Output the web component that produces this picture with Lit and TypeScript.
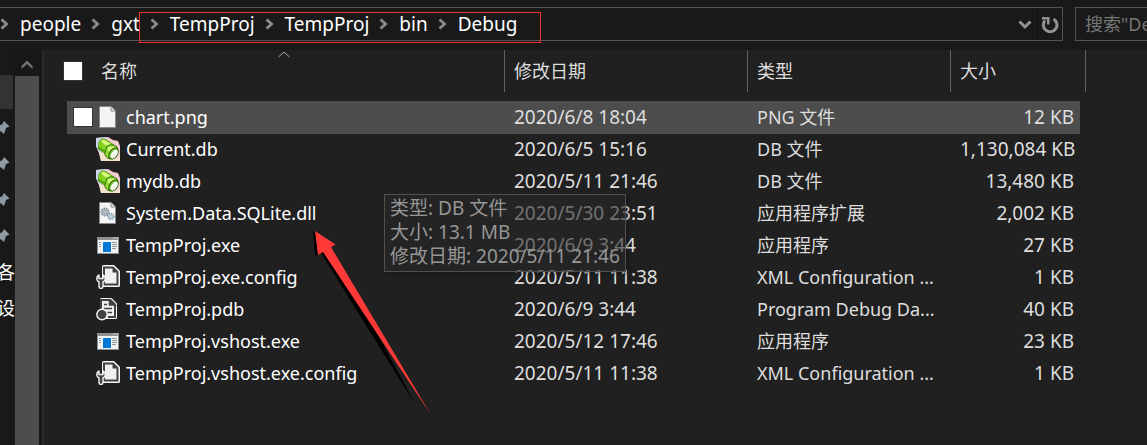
import { LitElement, html, css, svg } from "lit";
import { customElement } from "lit/decorators.js";

type Kind = "blank" | "db" | "dll" | "exe" | "config" | "pdb";
interface FileRow { name: string; date: string; type: string; size: string; kind: Kind; }

const FILES: FileRow[] = [
  { name: "chart.png", date: "2020/6/8 18:04", type: "PNG 文件", size: "12 KB", kind: "blank" },
  { name: "Current.db", date: "2020/6/5 15:16", type: "DB 文件", size: "1,130,084 KB", kind: "db" },
  { name: "mydb.db", date: "2020/5/11 21:46", type: "DB 文件", size: "13,480 KB", kind: "db" },
  { name: "System.Data.SQLite.dll", date: "2020/5/30 23:51", type: "应用程序扩展", size: "2,002 KB", kind: "dll" },
  { name: "TempProj.exe", date: "2020/6/9 3:44", type: "应用程序", size: "27 KB", kind: "exe" },
  { name: "TempProj.exe.config", date: "2020/5/11 11:38", type: "XML Configuration ...", size: "1 KB", kind: "config" },
  { name: "TempProj.pdb", date: "2020/6/9 3:44", type: "Program Debug Da...", size: "40 KB", kind: "pdb" },
  { name: "TempProj.vshost.exe", date: "2020/5/12 17:46", type: "应用程序", size: "23 KB", kind: "exe" },
  { name: "TempProj.vshost.exe.config", date: "2020/5/11 11:38", type: "XML Configuration ...", size: "1 KB", kind: "config" },
];

const page = svg`<path d="M3.5 1.5H15L19.5 6V22.5H3.5Z" fill="#f3f4f5" stroke="#898989"/>
  <path d="M15 1.5V6H19.5" fill="#dcdcdc" stroke="#898989"/>`;

const ICONS: Record<Kind, unknown> = {
  blank: page,
  db: svg`
    <path d="M0 1L12 0L17 3L22 4L24 9V24H5L3 16L0 9Z" fill="#f3cdd4"/>
    <path d="M0 1L10 0L12 12L6 18L3 16L0 9Z" fill="#cdd3ee"/>
    <path d="M3 15L12 17L20 22L24 20V24H5Z" fill="#f4e3cc"/>
    <path d="M3 5Q5 1 9 2L18 8L10 17L2 12Z" fill="#84d11e" stroke="#4f9a14" stroke-width=".8"/>
    <path d="M5 4.500Q7 2 9 3.300L16 8L13 11Z" fill="#d8fb7c"/>
    <path d="M2.500 10.500L10 15.500" stroke="#4a9610" stroke-width="1.500"/>
    <path d="M11 9Q16 6 21 10L22 13L14 22Q8 20 9 15Z" fill="#8fe02c" stroke="#35740f"/>
    <path d="M11.500 11.500Q15 8 19 10.500L13 15Z" fill="#dcff8c"/>
    <ellipse cx="17.500" cy="16.500" rx="4" ry="6.200" transform="rotate(35 17.500 16.500)" fill="#6bbd21" stroke="#2c650d"/>
    <ellipse cx="18.200" cy="17" rx="2.800" ry="4.800" transform="rotate(35 18.200 17)" fill="#f2f8f2"/>`,
  dll: svg`${page}
    <circle cx="9" cy="11" r="3.5" fill="#d3dade" stroke="#7c8b95" stroke-width="2" stroke-dasharray="1.6 .8"/>
    <circle cx="9" cy="11" r="1.4" fill="#fff" stroke="#7c8b95"/>
    <circle cx="15" cy="15.5" r="2.8" fill="#dfeaf1" stroke="#7c96a6" stroke-width="1.6" stroke-dasharray="1.4 .7"/>
    <circle cx="15" cy="15.5" r="1" fill="#fff" stroke="#7c96a6" stroke-width=".7"/>`,
  exe: svg`
    <path d="M1.5 4.5H22.5V20.5H1.5Z" fill="#f3f3f3" stroke="#8b9092"/>
    <path d="M1 4H23V7H1Z" fill="#8b9092"/>
    <path d="M17 5h1M19 5h1M21 5h1" stroke="#e8e8e8"/>
    <path d="M7 9H15V19H7Z" fill="#0078d7"/>
    <path d="M3 9.5h2M3 11.5h2M3 13.5h2M16 9.5h5M16 11.5h5M16 13.5h5M16 15.5h4" stroke="#8f9799"/>`,
  config: svg`
    <path d="M7.5 1.5H17.5L22.5 6.5V20.5H7.5Z" fill="#f0eff1" stroke="#f6f6f6" stroke-width="3" stroke-linejoin="round"/>
    <path d="M8 2.5H17L21.5 7V19.5H8Z" fill="#f0eff1" stroke="#424242" stroke-width="2"/>
    <path d="M16.5 2.5V7.5H21.5Z" fill="#424242"/>
    <path d="M3 10C0 11.500 0 15.500 3 17V21.500C3 24 7 24 7 21.500V17C10 15.500 10 11.500 7 10V13.500H3Z" fill="#424242" stroke="#f6f6f6" stroke-width="1.4" stroke-linejoin="round"/>`,
  pdb: svg`
    <path d="M5.5 2.5H15L19.5 7V20.5H5.5Z" fill="#f0eff1" stroke="#f6f6f6" stroke-width="3" stroke-linejoin="round"/>
    <path d="M5 12V3H14.5L19 7.5V20H12" fill="#f0eff1" stroke="#424242" stroke-width="2"/>
    <path d="M13.5 3V8H19ZM8 7.5h3M8 11.5h8M11 15.500h5" fill="#424242" stroke="#424242" stroke-width="1.6"/>
    <circle cx="6" cy="17.500" r="5.200" fill="#424242" stroke="#f6f6f6" stroke-width="1.4"/>`,
};

const chevron = html`<svg class="sep" viewBox="0 0 9 12" aria-hidden="true"><path d="M1.5 1.5L6.5 6L1.5 10.5" fill="none" stroke="#8a8a8a" stroke-width="3"/></svg>`;
const pin = html`<svg class="pin" viewBox="0 0 16 16" aria-hidden="true"><path d="M10 1L15.5 6.5L12 8L10 14L6.5 11L1 15.5L5 9.5L2 6L8 4.5Z" fill="#8e9aa3"/></svg>`;

@customElement("app-root")
export class AppRoot extends LitElement {
  static styles = css`
    :host { display: block; position: relative; min-height: 100vh; overflow: hidden; background: #191919; color: #fff;
      font: 18px/24px "Noto Sans", "Noto Sans CJK SC", sans-serif; }
    *, *::before { box-sizing: border-box; }
    svg { display: block; flex: none; }
    button { font: inherit; color: inherit; background: none; border: 0; padding: 0; text-align: left; }
    .top { display: flex; gap: 12px; height: 50px; padding-top: 7px; }
    .address { flex: 1; display: flex; align-items: center; height: 34px; border: 1px solid #535353; border-left: 0; }
    .crumbs { display: flex; align-items: center; flex: 1; margin: 0; padding: 0; list-style: none; }
    .crumbs li { display: flex; align-items: center; }
    .crumbs a { color: inherit; text-decoration: none; font-size: 19px; }
    .sep { width: 9px; height: 12px; margin: 0 11px 0 10px; }
    .crumbs li:first-child .sep { margin-left: 0; }
    .tool { display: flex; align-items: center; justify-content: center; width: 25px; height: 32px; padding-top: 2px; }
    .tool + .tool { border-left: 1px solid #111; }
    .search { width: 72px; height: 34px; background: #191919; border: 1px solid #535353; border-right: 0; border-radius: 0;
      padding: 0 0 0 9px; font: inherit; outline: 0; }
    .search::placeholder { color: #757575; opacity: 1; }
    .main { display: flex; min-height: calc(100vh - 50px); }
    .nav { width: 15px; overflow: hidden; padding-top: 25px; }
    .current { width: 13px; height: 34px; background: #333; }
    .item { display: flex; align-items: center; height: 36px; padding-top: 2px; white-space: nowrap; }
    .label { margin-left: -3px; }
    .pin { width: 16px; height: 16px; margin-left: -6px; }
    .scroll { width: 24px; background: #4d4d4d; }
    .up { display: flex; width: 24px; height: 26px; align-items: center; justify-content: center; padding-top: 4px; background: #171717; }
    .split { width: 5px; border-left: 3px solid #171717; background: #2b2b2b; }
    .list { flex: 1; min-width: 0; background: #202020; padding-right: 61px; }
    table { width: 100%; table-layout: fixed; border-collapse: separate; border-spacing: 0; }
    .c0 { width: 23px; } .c2 { width: 243px; } .c3 { width: 203px; } .c4 { width: 129px; } .c5 { width: 6px; }
    th { padding: 0 0 9px; font-weight: 400; text-align: left; color: #dedede; }
    .head { position: relative; display: flex; align-items: center; height: 42px; border-right: 1px solid #636363; padding-left: 9px; }
    .first { padding-left: 19px; gap: 18px; }
    .sort { position: absolute; top: 1px; left: calc(50% + 4px); }
    td { height: 32px; padding: 0 0 0 9px; white-space: nowrap; color: #dedede; }
    td.gap { padding: 0; }
    td.name { padding-left: 6px; color: #fff; }
    td.size { text-align: right; padding-right: 6px; }
    .date, .size { font-size: 19px; }
    .hover td:not(.gap) { background: #4d4d4d; box-shadow: 0 1px #4d4d4d; }
    .cell { display: flex; align-items: center; }
    .cell svg { margin-right: 6px; }
    input[type="checkbox"] { appearance: none; flex: none; width: 20px; height: 20px; margin: 0; background: #fff; border: 1px solid #333; border-radius: 0; }
    .slot { width: 23px; flex: none; display: flex; }
    .tip { position: absolute; left: 384px; top: 194px; border: 1px solid #505050; background: rgba(40, 40, 40, .6); color: #969696; padding: 1px 5px 3px; box-shadow: 3px 3px 3px rgba(0, 0, 0, .2); font-size: 19px; white-space: nowrap; }
    .tip div { line-height: 24px; }
    .mark { position: absolute; left: 139px; top: 12px; width: 402px; height: 31px; border: 1px solid #f03434; pointer-events: none; }
    .arrow { position: absolute; left: 300px; top: 225px; pointer-events: none; }
  `;

  render() {
    const crumbs = ["people", "gxt", "TempProj", "TempProj", "bin", "Debug"];
    return html`
      <header class="top">
        <div class="address">
          <ol class="crumbs">${crumbs.map((c) => html`<li>${chevron}<a href="#">${c}</a></li>`)}</ol>
          <button class="tool" aria-label="展开"><svg width="14" height="10" viewBox="0 0 14 10"><path d="M1.5 1.5L7 7L12.5 1.5" fill="none" stroke="#929292" stroke-width="3"/></svg></button>
          <button class="tool" aria-label="刷新"><svg width="18" height="18" viewBox="0 0 18 18"><path d="M12.5 3A6.8 6.8 0 1 1 4 4.5" fill="none" stroke="#929292" stroke-width="3"/><path d="M1 1H8.5V8.5H6V3.500H1Z" fill="#929292"/></svg></button>
        </div>
        <input class="search" type="text" aria-label="搜索" placeholder='搜索"Debug"'>
      </header>
      <div class="main">
        <nav class="nav">
          <div class="current"></div>
          ${[0, 1, 2, 3].map(() => html`<div class="item">${pin}</div>`)}
          <div class="item"><span class="label">各</span></div>
          <div class="item"><span class="label">设</span></div>
        </nav>
        <div class="scroll"><button class="up" aria-label="向上滚动"><svg width="12" height="10" viewBox="0 0 12 10"><path d="M.5 9V6L6 .5L11.5 6V9L6 4Z" fill="#777"/></svg></button></div>
        <div class="split"></div>
        <main class="list">
          <table>
            <colgroup><col class="c0"><col><col class="c2"><col class="c3"><col class="c4"><col class="c5"></colgroup>
            <thead><tr>
              <th colspan="2"><div class="head first"><input type="checkbox" aria-label="全选"><button>名称</button>
                <svg class="sort" width="12" height="7" viewBox="0 0 12 7"><path d="M.5 6L6 1L11.5 6" fill="none" stroke="#aaa"/></svg></div></th>
              <th><div class="head"><button>修改日期</button></div></th>
              <th><div class="head"><button>类型</button></div></th>
              <th colspan="2"><div class="head"><button>大小</button></div></th>
            </tr></thead>
            <tbody>${FILES.map((f, i) => html`<tr class=${i === 0 ? "hover" : ""}>
              <td class="gap"></td>
              <td class="name"><div class="cell"><span class="slot">${i === 0 ? html`<input type="checkbox" aria-label=${f.name}>` : ""}</span><svg width="24" height="24" viewBox="0 0 24 24" aria-hidden="true">${ICONS[f.kind]}</svg>${f.name}</div></td>
              <td class="date">${f.date}</td><td class="type">${f.type}</td><td class="size">${f.size}</td>
            </tr>`)}</tbody>
          </table>
        </main>
      </div>
      <div class="tip" role="tooltip"><div>类型: DB 文件</div><div>大小: 13.1 MB</div><div>修改日期: 2020/5/11 21:46</div></div>
      <div class="mark"></div>
      <svg class="arrow" width="140" height="195" viewBox="0 0 140 195" aria-hidden="true">
        <path d="M13 6L15 31L21 28L115 179L32 24Z" fill="#000"/>
        <path d="M15 6L35.5 19.5L31 22L131 190L23 27L18 30Z" fill="#ff3838"/>
      </svg>`;
  }
}
